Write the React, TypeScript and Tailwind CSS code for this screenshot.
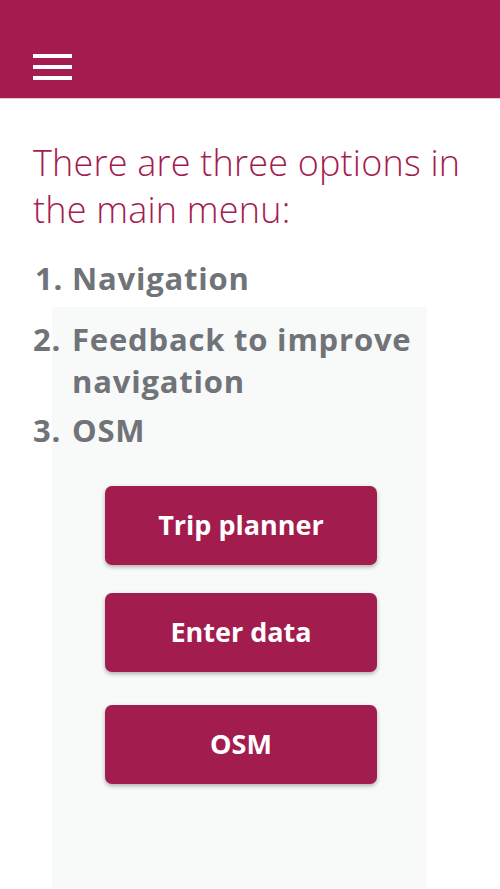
import React from "react";

const font = { fontFamily: '"Open Sans", "Noto Sans", sans-serif' };

function Btn({ label, className }: { label: string; className?: string }) {
  return (
    <button
      className={`ml-[53px] flex h-[79px] w-[272px] items-center justify-center rounded-[7px] bg-[#a31c4e] text-[27px] font-bold text-white shadow-[0_2px_4px_rgba(0,0,0,0.3)] ${className ?? ""}`}
    >
      {label}
    </button>
  );
}

export default function App() {
  return (
    <div className="min-h-[889px] w-[500px] overflow-hidden bg-white" style={font}>
      <header className="flex h-[99px] items-end border-b border-[#eac3d2] bg-[#a51c50] pb-[18px] pl-[33px]">
        <div className="flex flex-col gap-[7px]">
          <span className="block h-[4px] w-[39px] bg-white" />
          <span className="block h-[4px] w-[39px] bg-white" />
          <span className="block h-[4px] w-[39px] bg-white" />
        </div>
      </header>
      <div className="relative z-10 pl-[33px]">
        <h1 className="mt-[40px] text-[36px] font-light leading-[47px] tracking-[0.2px] text-[#a51c50]">
          There are three options in
          <br />
          the main menu:
        </h1>
        <ol className="mt-[24px] text-[31px] font-bold leading-[42px] tracking-[0.8px] text-[#707378]">
          <li className="flex">
            <span className="w-[39px] shrink-0 pl-[2px]">1.</span>
            <span>Navigation</span>
          </li>
          <li className="mt-[19px] flex">
            <span className="w-[39px] shrink-0">2.</span>
            <span>
              Feedback to improve
              <br />
              navigation
            </span>
          </li>
          <li className="mt-[7px] flex">
            <span className="w-[39px] shrink-0">3.</span>
            <span>OSM</span>
          </li>
        </ol>
      </div>
      <div className="ml-[52px] mt-[-144px] h-[581px] w-[375px] bg-[#f8f9f9] pt-[179px]">
        <Btn label="Trip planner" />
        <Btn label="Enter data" className="mt-[28px]" />
        <Btn label="OSM" className="mt-[33px]" />
      </div>
    </div>
  );
}
